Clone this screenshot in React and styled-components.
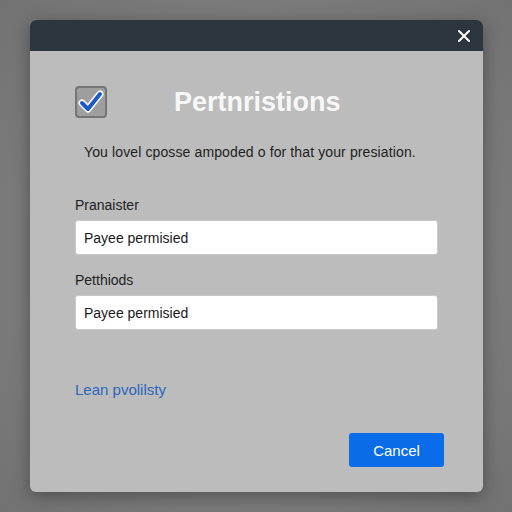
import React from "react";
import styled, { createGlobalStyle } from "styled-components";

const Global = createGlobalStyle`
  html, body {
    margin: 0;
    padding: 0;
    width: 512px;
    height: 512px;
    overflow: hidden;
    background: #7c7c7c;
    font-family: "Liberation Sans", Arial, sans-serif;
  }
`;

const Page = styled.div`
  width: 512px;
  height: 512px;
  box-sizing: border-box;
  padding: 20px 29px 20px 30px;
  background: radial-gradient(ellipse at center, #858585 0%, #7a7a7a 70%, #727272 100%);
`;

const Dialog = styled.div`
  height: 472px;
  display: flex;
  flex-direction: column;
  background: #bcbcbc;
  border-radius: 6px;
  overflow: hidden;
  box-shadow: 0 4px 18px rgba(0, 0, 0, 0.35);
`;

const Header = styled.div`
  height: 31px;
  flex: none;
  display: flex;
  align-items: center;
  justify-content: flex-end;
  padding-right: 12px;
  background: #2d363c;
`;

const CloseButton = styled.button`
  border: 0;
  background: none;
  padding: 0;
  width: 14px;
  height: 14px;
  display: flex;
  cursor: pointer;
`;

const Body = styled.div`
  flex: 1;
  display: flex;
  flex-direction: column;
  padding: 35px 45px 25px 45px;
`;

const TitleRow = styled.div`
  display: flex;
  align-items: center;
  height: 32px;
`;

const CheckBox = styled.div`
  width: 32px;
  height: 32px;
  box-sizing: border-box;
  border: 2px solid #757575;
  border-radius: 4px;
  background: #9e9e9e;
  display: flex;
  align-items: center;
  justify-content: center;
`;

const Title = styled.h1`
  margin: 0 0 0 67px;
  font-size: 27px;
  font-weight: 700;
  color: #f7f7f7;
`;

const Description = styled.p`
  margin: 26px 0 0 9px;
  font-size: 14px;
  line-height: 17px;
  letter-spacing: 0.12px;
  color: #1e1e1e;
`;

const Field = styled.div`
  display: flex;
  flex-direction: column;
  margin-top: ${(p) => p.$top}px;
`;

const Label = styled.label`
  font-size: 14px;
  line-height: 17px;
  color: #222;
  margin-bottom: 6px;
`;

const Input = styled.div`
  height: 35px;
  box-sizing: border-box;
  display: flex;
  align-items: center;
  padding-left: 8px;
  background: #ffffff;
  border: 1px solid #c9c9c9;
  border-radius: 3px;
  font-size: 14px;
  color: #1a1a1a;
`;

const Link = styled.a`
  margin-top: 51px;
  font-size: 15px;
  line-height: 17px;
  color: #2a67bd;
  text-decoration: none;
`;

const Footer = styled.div`
  margin-top: auto;
  display: flex;
  justify-content: flex-end;
  margin-right: -6px;
`;

const Button = styled.button`
  width: 95px;
  height: 34px;
  border: 0;
  border-radius: 3px;
  background: #0a6ce8;
  color: #ffffff;
  font-family: "Liberation Sans", Arial, sans-serif;
  font-size: 15px;
  cursor: pointer;
`;

export default function App() {
  return (
    <>
      <Global />
      <Page>
        <Dialog>
          <Header>
            <CloseButton aria-label="Close">
              <svg width="14" height="14" viewBox="0 0 14 14">
                <path d="M2 2 L12 12 M12 2 L2 12" stroke="#fff" strokeWidth="2" strokeLinecap="round" />
              </svg>
            </CloseButton>
          </Header>
          <Body>
            <TitleRow>
              <CheckBox>
                <svg width="26" height="24" viewBox="0 0 26 24">
                  <path d="M4 13 L10 19 L22 4" fill="none" stroke="#ffffff" strokeWidth="7" strokeLinecap="round" strokeLinejoin="round" />
                  <path d="M4 13 L10 19 L22 4" fill="none" stroke="#1d58c9" strokeWidth="4" strokeLinecap="round" strokeLinejoin="round" />
                </svg>
              </CheckBox>
              <Title>Pertnristions</Title>
            </TitleRow>
            <Description>You lovel cposse ampoded o for that your presiation.</Description>
            <Field $top={36}>
              <Label>Pranaister</Label>
              <Input>Payee permisied</Input>
            </Field>
            <Field $top={17}>
              <Label>Petthiods</Label>
              <Input>Payee permisied</Input>
            </Field>
            <Link href="#">Lean pvolilsty</Link>
            <Footer>
              <Button>Cancel</Button>
            </Footer>
          </Body>
        </Dialog>
      </Page>
    </>
  );
}
